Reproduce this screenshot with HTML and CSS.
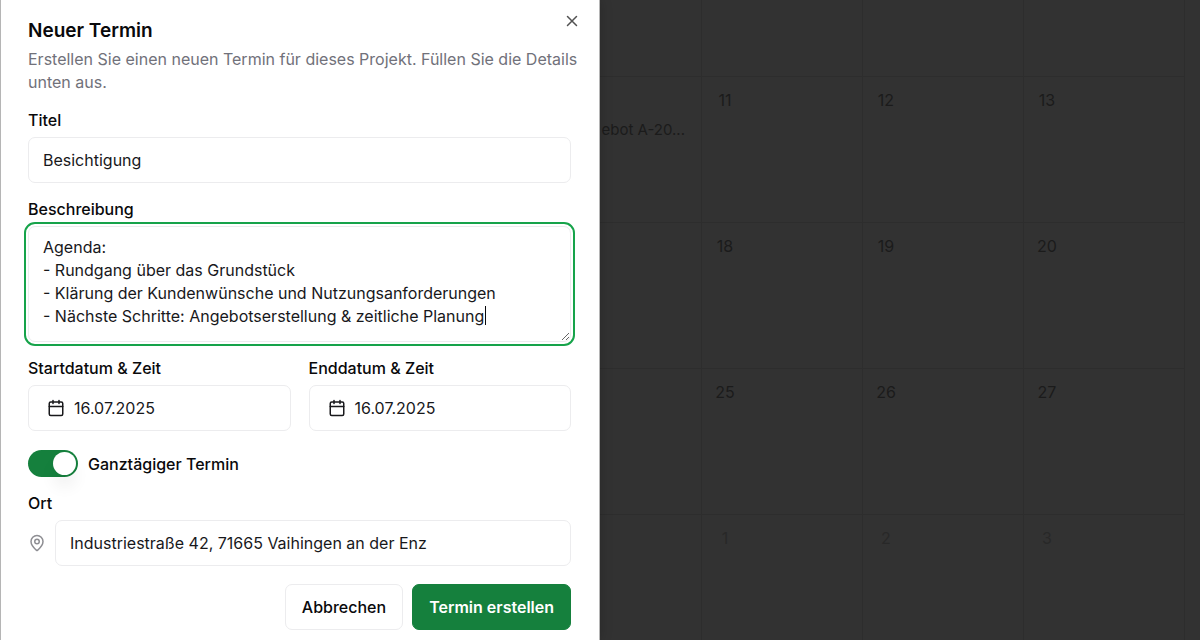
FILE: index.html
```html
<!DOCTYPE html>
<html lang="de">
<head>
<meta charset="utf-8">
<title>Neuer Termin</title>
<link rel="stylesheet" href="styles.css">
</head>
<body>
<main class="layout">
  <section class="dialog" role="dialog" aria-labelledby="dialog-title">
    <button class="close" type="button" aria-label="Schließen">
      <svg class="icon" viewBox="0 0 24 24"><path d="M18 6 6 18M6 6l12 12"/></svg>
    </button>
    <header class="header">
      <h1 class="title" id="dialog-title">Neuer Termin</h1>
      <p class="description">Erstellen Sie einen neuen Termin für dieses Projekt. Füllen Sie die Details unten aus.</p>
    </header>
    <form class="form">
      <div class="field">
        <label class="label" for="titel">Titel</label>
        <input class="control" id="titel" type="text" value="Besichtigung">
      </div>
      <div class="field">
        <label class="label" for="beschreibung">Beschreibung</label>
        <div class="editor">
          <textarea class="control textarea" id="beschreibung" rows="4" spellcheck="false">Agenda:
- Rundgang über das Grundstück
- Klärung der Kundenwünsche und Nutzungsanforderungen
- Nächste Schritte: Angebotserstellung &amp; zeitliche Planung</textarea>
          <span class="caret"></span>
        </div>
      </div>
      <div class="dates">
        <div class="field">
          <label class="label" for="start">Startdatum &amp; Zeit</label>
          <button class="control date" id="start" type="button">
            <svg class="icon" viewBox="0 0 24 24"><path d="M8 2v4M16 2v4M3 10h18"/><rect x="3" y="4" width="18" height="18" rx="2"/></svg>
            16.07.2025
          </button>
        </div>
        <div class="field">
          <label class="label" for="ende">Enddatum &amp; Zeit</label>
          <button class="control date" id="ende" type="button">
            <svg class="icon" viewBox="0 0 24 24"><path d="M8 2v4M16 2v4M3 10h18"/><rect x="3" y="4" width="18" height="18" rx="2"/></svg>
            16.07.2025
          </button>
        </div>
      </div>
      <div class="toggle">
        <input class="switch" id="ganztags" type="checkbox" role="switch" checked>
        <label class="label" for="ganztags">Ganztägiger Termin</label>
      </div>
      <div class="field">
        <label class="label" for="ort">Ort</label>
        <div class="place">
          <svg class="icon pin" viewBox="0 0 24 24"><path d="M20 10c0 4.993-5.539 10.193-7.399 11.799a1 1 0 0 1-1.202 0C9.539 20.193 4 14.993 4 10a8 8 0 0 1 16 0"/><circle cx="12" cy="10" r="3"/></svg>
          <input class="control" id="ort" type="text" value="Industriestraße 42, 71665 Vaihingen an der Enz">
        </div>
      </div>
      <footer class="actions">
        <button class="button" type="button">Abbrechen</button>
        <button class="button primary" type="submit">Termin erstellen</button>
      </footer>
    </form>
  </section>
  <section class="calendar" aria-label="Kalender">
    <div class="day"></div><div class="day"></div><div class="day"></div><div class="day"></div><div class="margin"></div>
    <div class="day"><span class="event">ebot A-20...</span></div>
    <div class="day"><span class="number">11</span></div>
    <div class="day"><span class="number">12</span></div>
    <div class="day"><span class="number">13</span></div>
    <div class="margin"></div>
    <div class="day"></div>
    <div class="day"><span class="number">18</span></div>
    <div class="day"><span class="number">19</span></div>
    <div class="day"><span class="number">20</span></div>
    <div class="margin"></div>
    <div class="day"></div>
    <div class="day"><span class="number">25</span></div>
    <div class="day"><span class="number">26</span></div>
    <div class="day"><span class="number">27</span></div>
    <div class="margin"></div>
    <div class="day"></div>
    <div class="day"><span class="number outside">1</span></div>
    <div class="day"><span class="number outside">2</span></div>
    <div class="day"><span class="number outside">3</span></div>
    <div class="margin"></div>
  </section>
</main>
</body>
</html>
```
FILE: styles.css
```css
* {
  box-sizing: border-box;
}

body {
  margin: 0;
  background: #323232;
  color: #18181b;
  font-family: Inter, "Liberation Sans", sans-serif;
  font-size: 16px;
  line-height: 23px;
}

.layout {
  display: grid;
  grid-template-columns: 1fr 1fr;
  min-height: 100vh;
}

.dialog {
  position: relative;
  z-index: 1;
  padding: 19px 28px 10px 27px;
  border: solid #b5b5b5;
  border-width: 0 1px;
  background: #fff;
  box-shadow: 0 0 12px rgba(0, 0, 0, 0.2);
}

.icon {
  flex: none;
  width: 18px;
  height: 18px;
  fill: none;
  stroke: currentColor;
  stroke-width: 2;
  stroke-linecap: round;
  stroke-linejoin: round;
}

.close {
  position: absolute;
  top: 12px;
  right: 18px;
  display: flex;
  padding: 0;
  border: 0;
  background: none;
  color: #525252;
}

.header {
  display: grid;
  gap: 5px;
  margin: 0 -20px 16px 0;
}

.title {
  margin: 0;
  color: #09090b;
  font-size: 19px;
  font-weight: 600;
  line-height: 24px;
}

.description {
  margin: 0;
  color: #71717a;
}

.form {
  display: grid;
  gap: 16px;
}

.field {
  display: grid;
  gap: 7px;
}

.label {
  color: #09090b;
  font-weight: 500;
  line-height: 20px;
}

.control {
  width: 100%;
  min-width: 0;
  height: 46px;
  padding: 0 14px;
  border: 1px solid #ececee;
  border-radius: 7px;
  background: #fff;
  color: #18181b;
  font: inherit;
}

.editor {
  position: relative;
}

.textarea {
  display: block;
  height: 116px;
  padding: 9px 14px;
  outline: 2px solid #16a34a;
  outline-offset: 2px;
  resize: vertical;
}

.caret {
  position: absolute;
  left: 457px;
  bottom: 17px;
  width: 1px;
  height: 19px;
  background: #09090b;
}

.dates {
  display: grid;
  grid-template-columns: 1fr 1fr;
  gap: 18px;
}

.date {
  display: flex;
  align-items: center;
  gap: 9px;
  padding: 0 18px;
}

.toggle {
  display: flex;
  align-items: center;
  gap: 10px;
  padding-top: 3px;
}

.switch {
  display: flex;
  align-items: center;
  justify-content: flex-end;
  width: 50px;
  height: 27px;
  margin: 0;
  padding: 2px;
  border-radius: 14px;
  background: #15803d;
  appearance: none;
}

.switch::before {
  width: 23px;
  height: 23px;
  border-radius: 50%;
  background: #fff;
  box-shadow: 0 12px 16px rgba(0, 0, 0, 0.06);
  content: "";
}

.place {
  display: flex;
  align-items: center;
  gap: 9px;
}

.pin {
  color: #8e8e93;
}

.actions {
  display: flex;
  justify-content: flex-end;
  gap: 9px;
  padding-top: 2px;
}

.button {
  height: 46px;
  padding: 0 16px;
  border: 1px solid #ececee;
  border-radius: 7px;
  background: #fff;
  color: #09090b;
  font: inherit;
  font-weight: 500;
}

.primary {
  border-color: #15803d;
  background: #15803d;
  color: #fff;
  font-weight: 600;
}

.calendar {
  display: grid;
  grid-template-columns: 102fr 161fr 161fr 161fr 15fr;
  grid-template-rows: 77px repeat(3, 146px) 1fr;
  color: #1b1b1b;
}

.day {
  display: flex;
  flex-direction: column;
  min-width: 0;
  padding: 9px;
  border: solid #2d2d2d;
  border-width: 0 1px 1px 0;
}

.day:nth-last-child(-n + 5) {
  border-bottom: 0;
}

.number {
  width: 28px;
  line-height: 28px;
  text-align: center;
}

.outside {
  color: #282828;
}

.event {
  align-self: flex-end;
  margin-top: 32px;
  padding-right: 7px;
  font-size: 15px;
  white-space: nowrap;
}
```
